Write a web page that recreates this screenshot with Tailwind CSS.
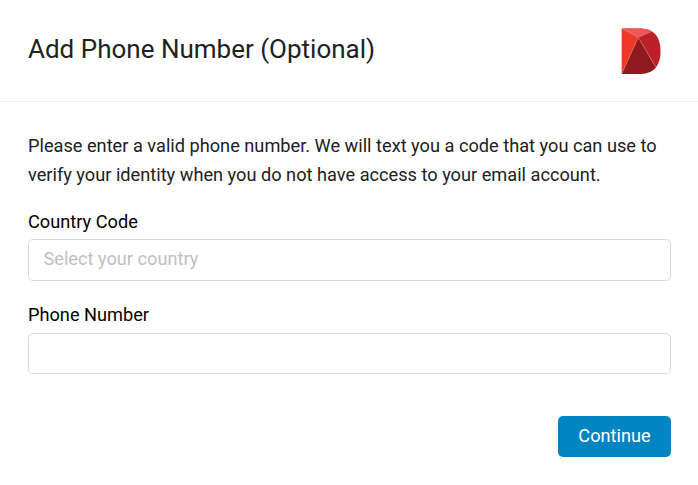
<!DOCTYPE html>
<html lang="en"><head><meta charset="utf-8"><title>Add Phone Number</title>
<script src="https://cdn.jsdelivr.net/npm/@tailwindcss/browser@4"></script></head>
<body class="bg-white font-['Roboto',sans-serif] text-[#212121]">
<main class="flex h-[485px] w-[698px] flex-col overflow-hidden">
<header class="flex h-[102px] items-center justify-between border-b border-[#eeeeee] pr-[37px] pl-7">
<h1 class="pb-1 text-[26px] leading-8">Add Phone Number (Optional)</h1>
<svg class="h-[46px] w-10" viewBox="0 0 40 46"><path d="M.7 .5H20C33 .5 39.6 9 39.6 23.5Q39.6 33 35 39.5L17.3 9.5Z" fill="#bd2029"/><path d="M.7 .5L17.3 9.5L.7 46Z" fill="#ef3728"/><path d="M.7 .5H20Q26.5 .5 31 3.5L17.3 9.5Z" fill="#f0555a"/><path d="M17.3 9.5L35 39.5Q29.5 46 20 46H.7Z" fill="#8f1a1d"/><path d="M.7 .5L17.3 9.5L31 3.5M.7 46L17.3 9.5L35 39.5" fill="none" stroke="#f3a09c" stroke-opacity=".6" stroke-width=".5"/></svg>
</header>
<form class="flex flex-col pt-[29px] pr-[27px] pl-7">
<p class="text-[18.2px] leading-[29px]">Please enter a valid phone number. We will text you a code that you can use to<br>verify your identity when you do not have access to your email account.</p>
<label for="country" class="mt-5 text-[18.2px] leading-[26px] text-black">Country Code</label>
<input id="country" placeholder="Select your country" class="mt-1 h-[42px] rounded-[5px] border border-[#d9d9d9] px-[14.5px] pb-[3px] text-[18.2px] placeholder:text-[#bfbfbf]">
<label for="phone" class="mt-[21px] text-[18.2px] leading-[26px] text-black">Phone Number</label>
<input id="phone" class="mt-[5px] h-[41px] rounded-[5px] border border-[#d9d9d9] px-[14.5px] text-[18.2px]">
<button type="button" class="mt-[42px] h-[41px] w-[113px] self-end rounded-[5px] bg-[#0085c3] pb-px text-[18.2px] text-white">Continue</button>
</form></main></body></html>
